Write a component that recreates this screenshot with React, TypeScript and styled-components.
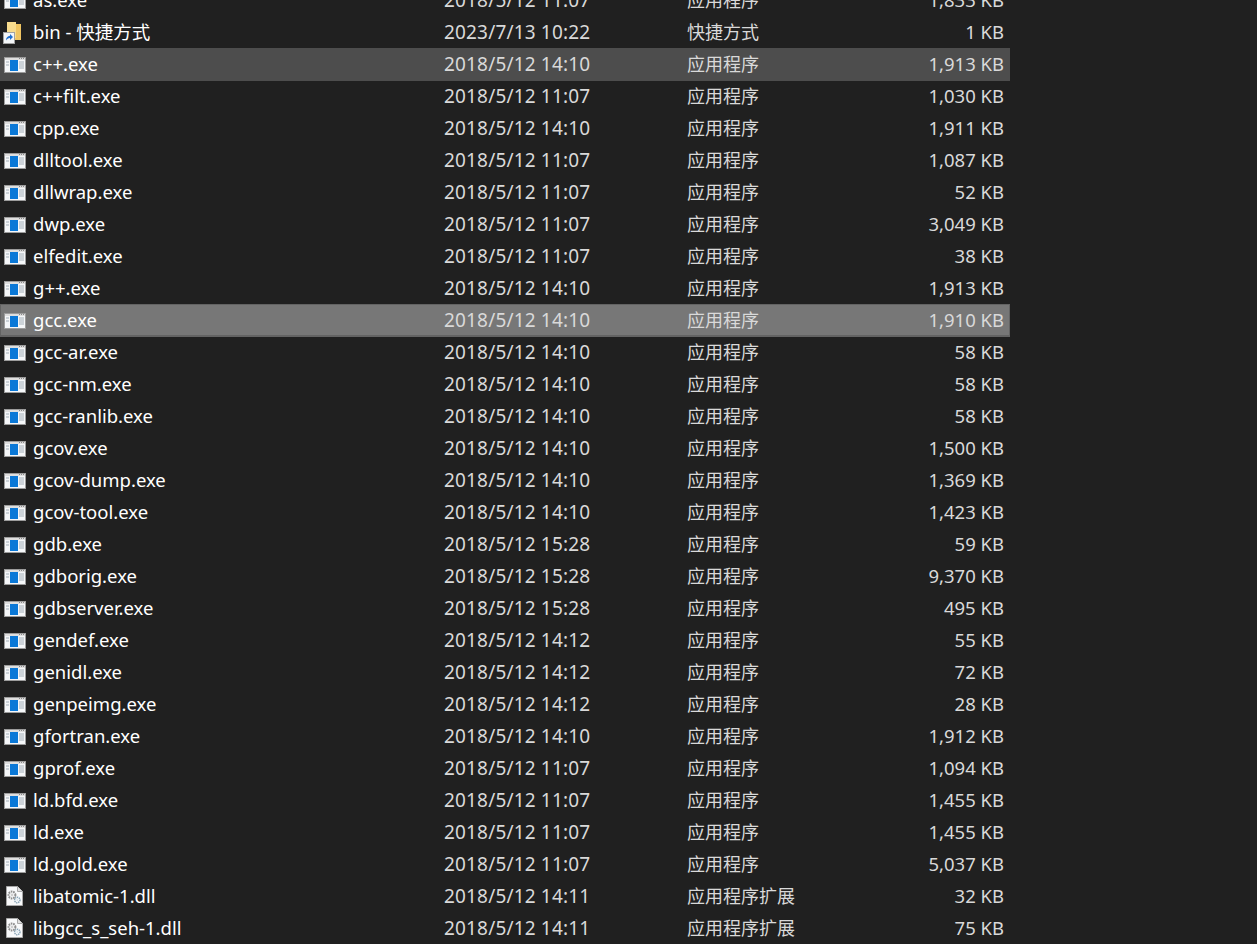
import styled, { createGlobalStyle } from "styled-components";

type FileKind = "exe" | "dll" | "link";
type RowState = "none" | "hover" | "selected";

type FileRow = {
  name: string;
  date: string;
  type: string;
  size: string;
  kind: FileKind;
  state?: RowState;
};

const exe = (name: string, date: string, size: string, state?: RowState): FileRow => ({
  name,
  date,
  type: "应用程序",
  size,
  kind: "exe",
  state,
});

const rows: FileRow[] = [
  exe("as.exe", "2018/5/12 11:07", "1,833 KB"),
  { name: "bin - 快捷方式", date: "2023/7/13 10:22", type: "快捷方式", size: "1 KB", kind: "link" },
  exe("c++.exe", "2018/5/12 14:10", "1,913 KB", "hover"),
  exe("c++filt.exe", "2018/5/12 11:07", "1,030 KB"),
  exe("cpp.exe", "2018/5/12 14:10", "1,911 KB"),
  exe("dlltool.exe", "2018/5/12 11:07", "1,087 KB"),
  exe("dllwrap.exe", "2018/5/12 11:07", "52 KB"),
  exe("dwp.exe", "2018/5/12 11:07", "3,049 KB"),
  exe("elfedit.exe", "2018/5/12 11:07", "38 KB"),
  exe("g++.exe", "2018/5/12 14:10", "1,913 KB"),
  exe("gcc.exe", "2018/5/12 14:10", "1,910 KB", "selected"),
  exe("gcc-ar.exe", "2018/5/12 14:10", "58 KB"),
  exe("gcc-nm.exe", "2018/5/12 14:10", "58 KB"),
  exe("gcc-ranlib.exe", "2018/5/12 14:10", "58 KB"),
  exe("gcov.exe", "2018/5/12 14:10", "1,500 KB"),
  exe("gcov-dump.exe", "2018/5/12 14:10", "1,369 KB"),
  exe("gcov-tool.exe", "2018/5/12 14:10", "1,423 KB"),
  exe("gdb.exe", "2018/5/12 15:28", "59 KB"),
  exe("gdborig.exe", "2018/5/12 15:28", "9,370 KB"),
  exe("gdbserver.exe", "2018/5/12 15:28", "495 KB"),
  exe("gendef.exe", "2018/5/12 14:12", "55 KB"),
  exe("genidl.exe", "2018/5/12 14:12", "72 KB"),
  exe("genpeimg.exe", "2018/5/12 14:12", "28 KB"),
  exe("gfortran.exe", "2018/5/12 14:10", "1,912 KB"),
  exe("gprof.exe", "2018/5/12 11:07", "1,094 KB"),
  exe("ld.bfd.exe", "2018/5/12 11:07", "1,455 KB"),
  exe("ld.exe", "2018/5/12 11:07", "1,455 KB"),
  exe("ld.gold.exe", "2018/5/12 11:07", "5,037 KB"),
  { name: "libatomic-1.dll", date: "2018/5/12 14:11", type: "应用程序扩展", size: "32 KB", kind: "dll" },
  { name: "libgcc_s_seh-1.dll", date: "2018/5/12 14:11", type: "应用程序扩展", size: "75 KB", kind: "dll" },
];

function ExeIcon() {
  return (
    <svg width="24" height="24" viewBox="0 0 24 24">
      <rect x="1" y="5" width="22" height="16" fill="#9c9c9c" />
      <rect x="2" y="6" width="20" height="14" fill="#f5f7f9" />
      <rect x="2" y="6" width="20" height="2" fill="#dedede" />
      <path d="M16 6h1v1h-1zM18 6h1v1h-1zM20 6h1v1h-1z" fill="#8a8a8a" />
      <rect x="7" y="8" width="8" height="11" fill="#0a78d7" />
      <path d="M3 10h3M3 13h3M16 10h5M16 12h5M16 14h5M16 16h5" stroke="#a4afb8" />
    </svg>
  );
}

function DllIcon() {
  return (
    <svg width="24" height="24" viewBox="0 0 24 24">
      <path d="M3.500 2.500h11l5 5v14h-16z" fill="#f8f9fa" stroke="#a8a8a8" />
      <path d="M14.500 2.500v5h5" fill="#dfdfdf" stroke="#a8a8a8" />
      <circle cx="9" cy="11" r="3.400" fill="none" stroke="#8e8e8e" strokeWidth="2" strokeDasharray="1.600 .8" />
      <circle cx="9" cy="11" r="1.400" fill="#cfcfcf" />
      <circle cx="14.300" cy="16" r="2.700" fill="none" stroke="#87a3b5" strokeWidth="1.500" strokeDasharray="1.300 .7" />
      <circle cx="14.300" cy="16" r="1" fill="#d6e4ee" />
    </svg>
  );
}

function LinkIcon() {
  return (
    <svg width="24" height="24" viewBox="0 0 24 24">
      <path d="M4 2h6l2 2h6v16H4z" fill="#f0c562" />
      <path d="M4 2h9v16l-9 2z" fill="#f8dc8e" />
      <rect x="0.500" y="12.500" width="11" height="11" fill="#f4f6f8" stroke="#a3a3a3" />
      <path d="M3 20.500c0-3 1.500-4.500 4-4.800V14l3 3-3 3v-2c-1.800 0-3 .9-4 2.500z" fill="#1f6fd0" />
    </svg>
  );
}

const icons = { exe: ExeIcon, dll: DllIcon, link: LinkIcon };

export default function App() {
  return (
    <>
      <GlobalStyle />
      <FileList>
        {rows.map((row) => {
          const Icon = icons[row.kind];
          return (
            <Row key={row.name} $state={row.state ?? "none"}>
              <IconCell>
                <Icon />
              </IconCell>
              <NameCell>{row.name}</NameCell>
              <DateCell>{row.date}</DateCell>
              <TypeCell>{row.type}</TypeCell>
              <SizeCell>{row.size}</SizeCell>
            </Row>
          );
        })}
      </FileList>
    </>
  );
}

const GlobalStyle = createGlobalStyle`
  html, body {
    margin: 0;
    height: 944px;
    overflow: hidden;
    background: #202020;
  }
  body {
    font-family: "Noto Sans", "Noto Sans CJK SC", sans-serif;
  }
`;

const FileList = styled.div`
  width: 1010px;
  margin-top: -16px;
`;

const rowBackgrounds: Record<RowState, string> = {
  none: "transparent",
  hover: "#4d4d4d",
  selected: "#777777",
};

const rowShadows: Record<RowState, string> = {
  none: "none",
  hover: "0 1px 0 #4d4d4d",
  selected: "inset 0 0 0 1px #636363, 0 1px 0 #636363",
};

const Row = styled.div<{ $state: RowState }>`
  display: grid;
  grid-template-columns: 33px 411px 243px 1fr 120px;
  align-items: center;
  height: 32px;
  padding-right: 6px;
  box-sizing: border-box;
  font-size: 18px;
  white-space: nowrap;
  background: ${(p) => rowBackgrounds[p.$state]};
  box-shadow: ${(p) => rowShadows[p.$state]};
`;

const IconCell = styled.div`
  display: flex;
  align-items: center;
  padding-left: 3px;
  height: 24px;
`;

const NameCell = styled.div`
  color: #ffffff;
  font-size: 18.5px;
  padding-bottom: 2px;
`;

const DateCell = styled.div`
  color: #d9d9d9;
  font-size: 19px;
  letter-spacing: 0.17px;
`;

const TypeCell = styled.div`
  color: #d9d9d9;
  padding-bottom: 2px;
`;

const SizeCell = styled.div`
  color: #d9d9d9;
  font-size: 18.5px;
  text-align: right;
  padding-bottom: 2px;
`;
